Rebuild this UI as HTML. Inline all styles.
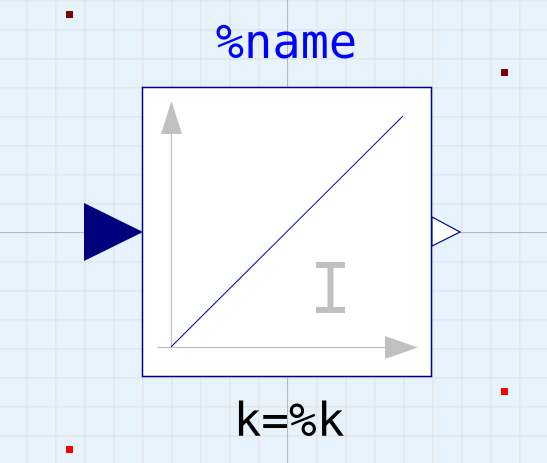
<!DOCTYPE html>
<html><head><style>
body{margin:0;width:547px;height:463px;overflow:hidden;background:#e6f3fd}
svg{position:absolute;left:0;top:0}
</style></head><body>
<svg width="547" height="463" viewBox="0 0 547 463">
<defs>
<pattern id="g" x="26.3" y="0.3" width="29" height="29" patternUnits="userSpaceOnUse">
<path d="M0.5 0V29M0 0.5H29" stroke="#e4e0de" stroke-width="1.2"/>
</pattern>
</defs>
<rect width="547" height="463" fill="url(#g)"/>
<line x1="0" y1="232.5" x2="547" y2="232.5" stroke="#b8b8b8" stroke-width="1"/>
<line x1="287.5" y1="0" x2="287.5" y2="463" stroke="#b8b8b8" stroke-width="1"/>
<rect x="66" y="11" width="7" height="7" fill="#800000"/>
<rect x="501" y="69" width="7" height="7" fill="#800000"/>
<rect x="501" y="388" width="7" height="7" fill="#ff0000"/>
<rect x="66" y="446" width="7" height="7" fill="#ff0000"/>
<rect x="142.5" y="87.5" width="289" height="289" fill="#fff" stroke="#00008b" stroke-width="1.5"/>
<polygon points="84,203 143,232 84,261" fill="#00007f"/>
<polygon points="432,217 460,232 432,246" fill="#fff" stroke="#00008b" stroke-width="1.2"/>
<line x1="171.5" y1="347" x2="171.5" y2="130" stroke="#c0c0c0" stroke-width="1.2"/>
<polygon points="171.5,101 182,134 161,134" fill="#c0c0c0"/>
<line x1="157" y1="347.5" x2="388" y2="347.5" stroke="#c0c0c0" stroke-width="1.2"/>
<polygon points="418,347.5 385,336 385,359" fill="#c0c0c0"/>
<line x1="171" y1="347" x2="403" y2="116" stroke="#0000c0" stroke-width="1"/>
<path d="M316 262H345V268H333.5V307H345V313H316V307H327.5V268H316Z" fill="#c0c0c0"/>
<text x="286.5" y="58" text-anchor="middle" font-family="DejaVu Sans Mono, monospace" font-size="47" fill="#0000ff">%name</text>
<text x="289" y="436" text-anchor="middle" font-family="DejaVu Sans Mono, monospace" font-size="46" fill="#000">k=%k</text>
</svg>
</body></html>
